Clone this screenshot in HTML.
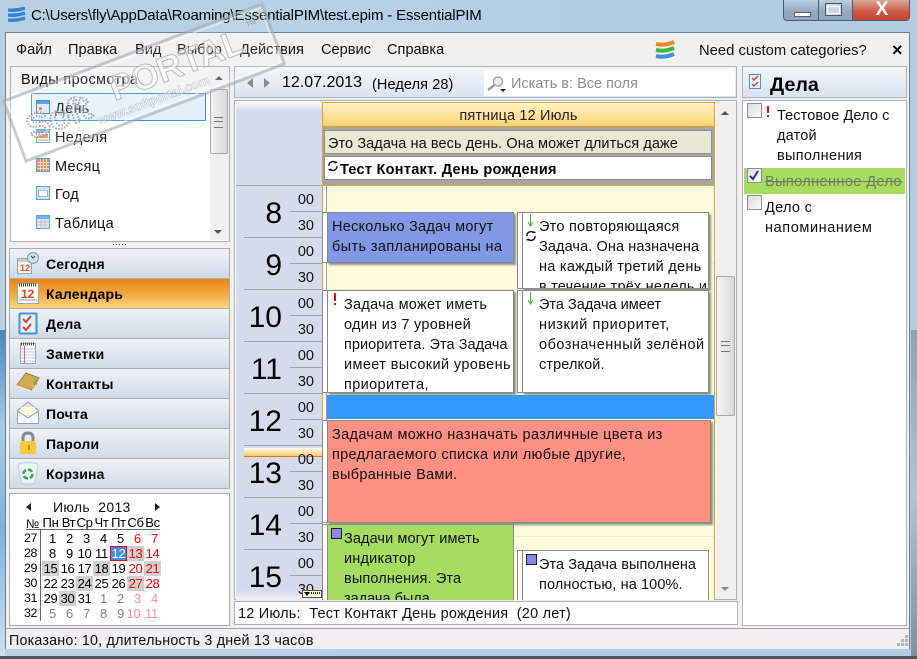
<!DOCTYPE html>
<html><head><meta charset="utf-8">
<style>
html,body{margin:0;padding:0}
body{width:917px;height:659px;overflow:hidden;position:relative;background:#b3cde3;font-family:"Liberation Sans","DejaVu Sans",sans-serif;color:#111;font-size:14px}
div,span,svg{position:absolute}
.t{white-space:nowrap;line-height:20px}
.n{left:10px;width:219px;height:29px;background:linear-gradient(#eef2f7,#cfdbe7);border-bottom:1px solid #a9adb1}
.nt{position:absolute;left:36px;top:5px;font-weight:bold;font-size:14px;letter-spacing:.2px;line-height:20px;white-space:nowrap;color:#000}
.v{left:55px;font-size:14.5px;letter-spacing:.3px;line-height:20px;white-space:nowrap}
.h{left:244px;width:78px;height:1px;background:#a0a4ab}
.m{left:290px;width:32px;height:1px;background:#a0a4ab}
.hh{width:40px;text-align:right;left:242px;font-size:30px;line-height:36px;color:#000}
.mm{left:288px;width:26px;text-align:right;font-size:14.5px;line-height:18px;color:#111}
.g{left:327px;width:387px;height:1px;background:#f0eccb}
.ev{box-sizing:border-box;border:1px solid #8a8a8a;box-shadow:2px 2px 2px #8e8e80;overflow:hidden}
.st{box-sizing:border-box;background:#fff;border:1px solid #8a8a8a;border-right:0;width:6px}
.c{width:17px;height:15px;line-height:15px;text-align:center;font-size:13px;letter-spacing:-.3px;color:#000}
.w{left:23px;width:14px;height:15px;line-height:15px;text-align:right;font-size:12.4px;letter-spacing:-.4px;color:#000;overflow:hidden}
.r{color:#f00}.o{color:#808080}.p{color:#ff8a99}.b{background:#d0d0d0}
.l{white-space:nowrap;font-size:14.5px;line-height:20px;color:#111}
.mn{top:40px;font-size:14.6px}
</style></head>
<body>
<!-- aero frame -->
<div style="left:0;top:0;width:917px;height:659px;background:linear-gradient(90deg,#b9d0e2 0,#b5d0e6 40%,#b0cbe2 100%)"></div>
<div style="left:0;top:330px;width:5px;height:329px;background:linear-gradient(#4a86bd,#a9cbe8 30%,#7fb0dc 60%,#cfe0ef)"></div>
<div style="left:911px;top:330px;width:6px;height:329px;background:linear-gradient(#8fa3b5,#b0c4d4 50%,#7f8f9c)"></div>
<div style="left:0;top:656px;width:917px;height:3px;background:#4e565e"></div>
<!-- title -->
<svg style="left:7px;top:7px" width="19" height="16" viewBox="0 0 19 16"><path d="M1 3Q9 4 18 1M1 8Q9 9 18 6M1 13Q9 14 18 11" stroke="#2f86d8" stroke-width="3.4" fill="none"/></svg>
<div class="t" style="left:31px;top:6px;font-size:15px;letter-spacing:-.17px;color:#000">C:\Users\fly\AppData\Roaming\EssentialPIM\test.epim - EssentialPIM</div>
<!-- window buttons -->
<div style="left:783px;top:0;width:127px;height:21px;box-sizing:border-box;border:1px solid #4f5b66;border-top:0;border-radius:0 0 4px 4px;background:linear-gradient(#b9cfe2,#93aabf 55%,#8ea5ba);overflow:hidden">
 <div style="left:34px;top:0;width:1px;height:21px;background:#4f5b66"></div>
 <div style="left:68px;top:0;width:58px;height:21px;border-left:1px solid #4f5b66;background:linear-gradient(#d9a89c,#cf5a45 55%,#c24030)"></div>
 <div style="left:10px;top:12px;width:15px;height:3px;background:#fff;border:1px solid #56616c"></div>
 <div style="left:41px;top:3px;width:15px;height:11px;border:1px solid #4c5762;background:#c9d9e6"><div style="left:1px;top:2px;width:11px;height:6px;border:1px solid #fff"></div></div>
 <div style="left:69px;top:-2px;width:58px;text-align:center;color:#fff;font:bold 19px/24px 'Liberation Sans',sans-serif">X</div>
</div>
<!-- client -->
<div style="left:5px;top:32px;width:905px;height:617px;box-sizing:border-box;border:1px solid #6f7f8e;background:#f0f0f0"></div>
<div class="t mn" style="left:16px">Файл</div>
<div class="t mn" style="left:68px">Правка</div>
<div class="t mn" style="left:135px">Вид</div>
<div class="t mn" style="left:177px">Выбор</div>
<div class="t mn" style="left:240px">Действия</div>
<div class="t mn" style="left:321px">Сервис</div>
<div class="t mn" style="left:387px">Справка</div>
<svg style="left:654px;top:40px" width="22" height="19" viewBox="0 0 22 19"><path d="M2 4Q11 6 20 2" stroke="#f08a1c" stroke-width="4" fill="none"/><path d="M2 10Q11 12 20 8" stroke="#3fb93f" stroke-width="4" fill="none"/><path d="M2 16Q11 18 20 14" stroke="#3a8fe0" stroke-width="4" fill="none"/></svg>
<div class="t" style="left:699px;top:41px;font-size:14.8px">Need custom categories?</div>
<div class="t" style="left:892px;top:40px;font-size:18px;font-weight:bold;color:#000">×</div>

<!-- views panel -->
<div style="left:10px;top:66px;width:220px;height:175px;background:#fff;box-sizing:border-box;border:1px solid #aeb2b6;border-bottom:0"></div>
<div style="left:11px;top:67px;width:199px;height:26px;background:#f3f3f3"></div>
<div class="t" style="left:21px;top:70px;font-size:14.5px;letter-spacing:.35px">Виды просмотра</div>
<div style="left:31px;top:93px;width:175px;height:28px;box-sizing:border-box;border:1px solid #3f8fe0;background:#e4effa"></div>
<div class="v" style="top:99px">День</div>
<div class="v" style="top:128px">Неделя</div>
<div class="v" style="top:157px">Месяц</div>
<div class="v" style="top:185px">Год</div>
<div class="v" style="top:214px">Таблица</div>
<svg style="left:36px;top:100px" width="14" height="14"><rect x=".5" y=".5" width="13" height="13" fill="#dde9f5" stroke="#2f82cf"/><rect x="1" y="1" width="12" height="3" fill="#3f93e0"/><rect x="3" y="7" width="3" height="3" fill="#e8734a"/></svg>
<svg style="left:36px;top:129px" width="14" height="14"><rect x=".5" y=".5" width="13" height="13" fill="#fff" stroke="#55a5ee"/><rect x="1" y="1" width="12" height="3" fill="#6fb5f0"/><rect x="2" y="5" width="10" height="4" fill="#f08a5d"/><rect x="2" y="10" width="10" height="2" fill="#f6c0a0"/></svg>
<svg style="left:36px;top:158px" width="14" height="14"><rect x=".5" y=".5" width="13" height="13" fill="#f08a5d" stroke="#55a5ee"/><path d="M4.5 1V13M7.5 1V13M10.500 1V13M1 4.5H13M1 7.5H13M1 10.500H13" stroke="#ffd8c0"/></svg>
<svg style="left:36px;top:186px" width="14" height="14"><rect x=".5" y=".5" width="13" height="13" fill="#cfe6fb" stroke="#55a5ee"/><rect x="2.5" y="4.5" width="9" height="6" fill="#fff" stroke="#5b7fb5" stroke-dasharray="1 1"/></svg>
<svg style="left:36px;top:215px" width="14" height="14"><rect x=".5" y=".5" width="13" height="13" fill="#e3e6ee" stroke="#55a5ee"/><rect x="1" y="1" width="12" height="3" fill="#6fb5f0"/><path d="M1 7H13M1 10H13M5 4V13M9 4V13" stroke="#c0c4d0"/></svg>
<!-- views scrollbar -->
<div style="left:210px;top:67px;width:19px;height:173px;background:#f0f0f0"></div>
<div style="left:210px;top:89px;width:18px;height:65px;box-sizing:border-box;border:1px solid #a8a8a8;border-radius:2px;background:linear-gradient(90deg,#f2f2f2,#d8d8d8)"></div>
<div style="left:214px;top:117px;width:9px;height:9px;border-top:1px solid #777;border-bottom:1px solid #777"><div style="left:0;top:3px;width:9px;height:1px;background:#777"></div></div>
<div style="left:215px;top:76px;width:0;height:0;border:4px solid transparent;border-bottom:4px solid #555;border-top:0"></div>
<div style="left:214px;top:230px;width:0;height:0;border:4px solid transparent;border-top:4px solid #555;border-bottom:0"></div>
<div style="left:10px;top:241px;width:220px;height:8px;background:#f0f0f0;border-top:1px solid #aeb2b6;box-sizing:border-box"></div>
<div style="left:113px;top:244px;width:14px;height:1px;background-image:linear-gradient(90deg,#333 1px,transparent 1px);background-size:3px 1px"></div>

<!-- nav -->
<div style="left:9px;top:248px;width:221px;height:241px;background:#a9adb1"></div>
<div class="n" style="top:249px"><div class="nt">Сегодня</div></div>
<div class="n" style="top:279px;background:linear-gradient(#e98510,#f2a83c 50%,#fbd57e)"><div class="nt">Календарь</div></div>
<div class="n" style="top:309px"><div class="nt">Дела</div></div>
<div class="n" style="top:339px"><div class="nt">Заметки</div></div>
<div class="n" style="top:369px"><div class="nt">Контакты</div></div>
<div class="n" style="top:399px"><div class="nt">Почта</div></div>
<div class="n" style="top:429px"><div class="nt">Пароли</div></div>
<div class="n" style="top:459px"><div class="nt">Корзина</div></div>
<!-- nav icons -->
<svg style="left:16px;top:251px" width="24" height="24"><rect x="1.5" y="7.5" width="14" height="15" fill="#f4f4f4" stroke="#9aa"/><rect x="2" y="8" width="13" height="3" fill="#c9ccd0"/><text x="4" y="20" font-size="9" font-weight="bold" fill="#e85a20" font-family="Liberation Sans">12</text><circle cx="17" cy="7" r="5.5" fill="#cfe0f0" stroke="#7f97ae"/><path d="M15 5L17 7L19 5" stroke="#445" fill="none"/></svg>
<svg style="left:16px;top:281px" width="24" height="24"><rect x="1.5" y="2.5" width="21" height="20" fill="#fbfbfb" stroke="#9aa"/><path d="M3 4H21" stroke="#444" stroke-width="3" stroke-dasharray="1 1"/><rect x="4" y="7" width="16" height="10" fill="#fff"/><text x="5" y="17" font-size="12" font-weight="bold" fill="#e8401c" font-family="Liberation Sans">12</text><path d="M3 19H21" stroke="#c5c9d5" stroke-width="2"/></svg>
<svg style="left:18px;top:311px" width="20" height="24"><rect x="1.5" y="2.5" width="17" height="20" rx="1" fill="#e8eef5" stroke="#3f93e0" stroke-width="2"/><path d="M5 8L8 11L13 5M5 16L8 19L13 13" stroke="#d8442a" stroke-width="2" fill="none"/></svg>
<svg style="left:20px;top:341px" width="17" height="24"><rect x=".5" y="2.5" width="15" height="20" fill="#fdfdff" stroke="#9aa6b8"/><path d="M1 3H15" stroke="#555" stroke-width="3" stroke-dasharray="1 1"/><path d="M1 8H15M1 11H15M1 14H15M1 17H15M1 20H15" stroke="#bcd0e8"/><path d="M4.5 5V22" stroke="#e06a50"/></svg>
<svg style="left:16px;top:372px" width="24" height="20"><path d="M1 13L10 1L23 6L15 18Z" fill="#d6a852" stroke="#a07a30"/><path d="M1 13L1 15L15 20L15 18Z" fill="#f2e6c8"/><path d="M19 8L22 9M18 11L21 12" stroke="#6cb33c" stroke-width="2"/><path d="M16 14L19 15" stroke="#e9c53a" stroke-width="2"/></svg>
<svg style="left:16px;top:401px" width="24" height="24"><path d="M1.5 9.5L12 1L22.5 9.5V22.5H1.5Z" fill="#dde6f0" stroke="#93a3b3"/><rect x="5" y="6" width="14" height="8" fill="#fffbd8"/><path d="M1.5 10L12 17L22.5 10V22.5H1.5Z" fill="#f4f7fb" stroke="#93a3b3"/></svg>
<svg style="left:19px;top:431px" width="18" height="24"><path d="M4 11V7Q4 2 9 2Q14 2 14 7V11" stroke="#8a8a8a" stroke-width="3" fill="none"/><rect x="1" y="10" width="16" height="13" rx="2" fill="#f6c93a"/><rect x="9" y="14" width="2" height="5" fill="#c89010"/></svg>
<svg style="left:17px;top:461px" width="22" height="24"><path d="M1 3Q11 0 21 3L18 22Q11 24 4 22Z" fill="#e8f3fa" stroke="#b5cfe0"/><circle cx="11" cy="13" r="4.5" fill="none" stroke="#3eaa3e" stroke-width="2.5" stroke-dasharray="5 2"/></svg>

<!-- mini cal -->
<div style="left:9px;top:493px;width:221px;height:133px;box-sizing:border-box;border:1px solid #a9adb1;background:#fff"></div>
<div style="left:26px;top:503px;width:0;height:0;border:4px solid transparent;border-right:5px solid #222;border-left:0"></div>
<div style="left:155px;top:503px;width:0;height:0;border:4px solid transparent;border-left:5px solid #222;border-right:0"></div>
<div class="t" style="left:53px;top:497px;font-size:14px;letter-spacing:.3px">Июль&nbsp; 2013</div>
<div class="t" style="left:26px;top:514px;font-size:12.5px;letter-spacing:-.3px">№</div>
<div class="t c" style="left:42px;top:515px">Пн</div><div class="t c" style="left:60px;top:515px">Вт</div><div class="t c" style="left:76px;top:515px">Ср</div><div class="t c" style="left:93px;top:515px">Чт</div><div class="t c" style="left:110px;top:515px">Пт</div><div class="t c" style="left:127px;top:515px">Сб</div><div class="t c" style="left:144px;top:515px">Вс</div>
<div style="left:26px;top:529px;width:134px;height:1px;background:#666"></div>
<div style="left:40px;top:530px;width:1px;height:91px;background:#666"></div>
<div class="w" style="top:531px">27</div><div class="w" style="top:546px">28</div><div class="w" style="top:561px">29</div><div class="w" style="top:576px">30</div><div class="w" style="top:591px">31</div><div class="w" style="top:606px">32</div>

<div class="c" style="left:44px;top:531px">1</div><div class="c" style="left:61px;top:531px">2</div><div class="c" style="left:78px;top:531px">3</div><div class="c" style="left:95px;top:531px">4</div><div class="c" style="left:112px;top:531px">5</div><div class="c r" style="left:129px;top:531px">6</div><div class="c r" style="left:146px;top:531px">7</div>

<div class="c" style="left:44px;top:546px">8</div><div class="c" style="left:61px;top:546px">9</div><div class="c" style="left:76px;top:546px">10</div><div class="c" style="left:93px;top:546px">11</div>
<div class="c" style="left:110px;top:546px;background:#3d8fe8;color:#fff;box-sizing:border-box;border:1px solid #f00;line-height:13px">12</div>
<div class="c r b" style="left:127px;top:546px">13</div><div class="c r" style="left:144px;top:546px">14</div>

<div class="c b" style="left:42px;top:561px">15</div><div class="c" style="left:59px;top:561px">16</div><div class="c" style="left:76px;top:561px">17</div><div class="c b" style="left:93px;top:561px">18</div><div class="c" style="left:110px;top:561px">19</div><div class="c r" style="left:127px;top:561px">20</div><div class="c r b" style="left:144px;top:561px">21</div>

<div class="c" style="left:42px;top:576px">22</div><div class="c" style="left:59px;top:576px">23</div><div class="c b" style="left:76px;top:576px">24</div><div class="c" style="left:93px;top:576px">25</div><div class="c" style="left:110px;top:576px">26</div><div class="c r b" style="left:127px;top:576px">27</div><div class="c r" style="left:144px;top:576px">28</div>

<div class="c" style="left:42px;top:591px">29</div><div class="c b" style="left:59px;top:591px">30</div><div class="c" style="left:76px;top:591px">31</div><div class="c o" style="left:95px;top:591px">1</div><div class="c o" style="left:112px;top:591px">2</div><div class="c p" style="left:129px;top:591px">3</div><div class="c p" style="left:146px;top:591px">4</div>

<div class="c o" style="left:44px;top:606px">5</div><div class="c o" style="left:61px;top:606px">6</div><div class="c o" style="left:78px;top:606px">7</div><div class="c o" style="left:95px;top:606px">8</div><div class="c o" style="left:112px;top:606px">9</div><div class="c p" style="left:125px;top:606px">10</div><div class="c p" style="left:143px;top:606px">11</div>

<!-- center header -->
<div style="left:234px;top:66px;width:503px;height:32px;box-sizing:border-box;border:1px solid #aeb2b6;background:linear-gradient(#f3f6fa,#d9e4ef)"></div>
<div style="left:247px;top:78px;width:0;height:0;border:5px solid transparent;border-right:6px solid #8d8d8d;border-left:0"></div>
<div style="left:264px;top:78px;width:0;height:0;border:5px solid transparent;border-left:6px solid #8d8d8d;border-right:0"></div>
<div class="t" style="left:282px;top:73px;font-size:16px;color:#000">12.07.2013</div>
<div class="t" style="left:372px;top:75px;font-size:14.5px;letter-spacing:.1px;color:#000">(Неделя 28)</div>
<div style="left:484px;top:70px;width:251px;height:26px;background:#fff"></div>
<svg style="left:486px;top:75px" width="24" height="18"><circle cx="12" cy="6.5" r="4.5" fill="#eee" stroke="#a8a8a8" stroke-width="1.5"/><path d="M8.5 10L2 15" stroke="#9a9a9a" stroke-width="2.5"/><path d="M14 14H20L17 17Z" fill="#222"/></svg>
<div class="t" style="left:511px;top:74px;font-size:14.5px;color:#8e8e8e">Искать в: Все поля</div>

<!-- day view -->
<div style="left:234px;top:100px;width:503px;height:500px;box-sizing:border-box;border:1px solid #aeb2b6;background:#fff"></div>
<div style="left:236px;top:111px;width:86px;height:489px;background:#d3dbed"></div>
<div style="left:236px;top:101px;width:86px;height:10px;background:linear-gradient(#fff,#d3dbed)"></div>
<div style="left:236px;top:590px;width:86px;height:10px;background:linear-gradient(#d3dbed,#eef1f7)"></div>
<div style="left:322px;top:186px;width:393px;height:414px;background:#fefcdc"></div>
<div style="left:322px;top:102px;width:393px;height:25px;box-sizing:border-box;border:1px solid #f0a020;background:linear-gradient(#fff4c8,#fcd272);text-align:center;font-size:14.5px;letter-spacing:.15px;line-height:26px;color:#222">пятница 12 Июль</div>
<div style="left:322px;top:127px;width:393px;height:59px;background:#a5a5a5;border-left:1px solid #f0a020;border-right:1px solid #f0a020;box-sizing:border-box"></div>
<div style="left:324px;top:130px;width:388px;height:24px;box-sizing:border-box;border:1px solid #8c8c8c;background:#e8e8d4"><div class="t" style="left:3px;top:3px;font-size:14.5px;letter-spacing:.08px">Это Задача на весь день. Она может длиться даже</div></div>
<div style="left:324px;top:156px;width:388px;height:24px;box-sizing:border-box;border:1px solid #8c8c8c;background:#fff"><div class="t" style="left:15px;top:3px;font-size:14.5px;letter-spacing:.27px;font-weight:bold;color:#000">Тест Контакт. День рождения</div></div>
<svg style="left:327px;top:160px" width="12" height="12" viewBox="0 0 12 12"><path d="M2 6A4 4 0 0 1 9 3M10 6A4 4 0 0 1 3 9" fill="none" stroke="#111" stroke-width="1.4"/><path d="M7 3H11L9 1ZM5 9H1L3 11Z" fill="#111"/></svg>
<div style="left:322px;top:186px;width:1px;height:414px;background:#f0a020"></div>
<div style="left:714px;top:127px;width:1px;height:473px;background:#f0a020"></div>
<div style="left:322px;top:185px;width:393px;height:1px;background:#f0a020"></div>
<div style="left:323px;top:186px;width:4px;height:414px;background:#fff;border-right:1px solid #9b9b9b;box-sizing:border-box"></div>

<!-- grid lines -->
<div class="g" style="top:237px"></div><div class="g" style="top:263px"></div><div class="g" style="top:289px"></div><div class="g" style="top:536px"></div><div class="g" style="top:445px"></div><div class="g" style="top:471px"></div><div class="g" style="top:497px"></div>

<!-- time col -->
<div style="left:236px;top:185px;width:86px;height:1px;background:#a0a4ab"></div>
<div class="h" style="top:237px"></div><div class="h" style="top:289px"></div><div class="h" style="top:341px"></div><div class="h" style="top:393px"></div><div class="h" style="top:445px"></div><div class="h" style="top:497px"></div><div class="h" style="top:549px"></div>
<div class="m" style="top:211px"></div><div class="m" style="top:263px"></div><div class="m" style="top:315px"></div><div class="m" style="top:367px"></div><div class="m" style="top:419px"></div><div class="m" style="top:471px"></div><div class="m" style="top:523px"></div><div class="m" style="top:575px"></div>
<div class="hh" style="top:196px">8</div><div class="hh" style="top:248px">9</div><div class="hh" style="top:300px">10</div><div class="hh" style="top:352px">11</div><div class="hh" style="top:404px">12</div><div class="hh" style="top:456px">13</div><div class="hh" style="top:508px">14</div><div class="hh" style="top:560px">15</div>
<div style="left:244px;top:448px;width:78px;height:8px;background:linear-gradient(#fbfbf0,#f8c870)"></div>
<div style="left:244px;top:456px;width:78px;height:1px;background:#e07a10"></div>
<div class="mm" style="top:191px">00</div><div class="mm" style="top:217px">30</div><div class="mm" style="top:243px">00</div><div class="mm" style="top:269px">30</div><div class="mm" style="top:295px">00</div><div class="mm" style="top:321px">30</div><div class="mm" style="top:347px">00</div><div class="mm" style="top:373px">30</div><div class="mm" style="top:399px">00</div><div class="mm" style="top:425px">30</div><div class="mm" style="top:451px">00</div><div class="mm" style="top:477px">30</div><div class="mm" style="top:503px">00</div><div class="mm" style="top:529px">30</div><div class="mm" style="top:555px">00</div><div class="mm" style="top:581px">30</div>
<div style="left:302px;top:590px;width:20px;height:8px;box-sizing:border-box;border:1px solid #555;background:#fffbd0"></div>
<div style="left:304px;top:592px;width:0;height:0;border:3px solid transparent;border-top:4px solid #000;border-bottom:0"></div>
<div style="left:311px;top:592px;width:10px;height:2px;background-image:linear-gradient(90deg,#333 1px,transparent 1px);background-size:2px 2px"></div>

<!-- events -->
<div class="st" style="left:322px;top:212px;height:51px"></div>
<div class="ev" style="left:327px;top:212px;width:187px;height:51px;background:#8298e4;border-color:#7d8a9c"><div class="l" style="left:4px;top:4px;letter-spacing:.24px">Несколько Задач могут</div><div class="l" style="left:4px;top:24px;letter-spacing:.38px">быть запланированы на</div></div>
<div class="st" style="left:517px;top:212px;height:77px"></div>
<div class="ev" style="left:522px;top:212px;width:187px;height:77px;background:#fff"><div class="l" style="left:16px;top:4px;letter-spacing:.24px">Это повторяющаяся</div><div class="l" style="left:16px;top:24px;letter-spacing:.1px">Задача. Она назначена</div><div class="l" style="left:16px;top:44px;letter-spacing:.27px">на каждый третий день</div><div class="l" style="left:16px;top:64px;letter-spacing:.2px">в течение трёх недель и</div></div>
<svg style="left:527px;top:214px" width="8" height="13"><path d="M3.5 0V11M1 8L3.5 12L6 8" stroke="#2ec22e" fill="none"/></svg>
<svg style="left:525px;top:230px" width="12" height="12" viewBox="0 0 12 12"><path d="M2 6A4 4 0 0 1 9 3M10 6A4 4 0 0 1 3 9" fill="none" stroke="#111" stroke-width="1.4"/><path d="M7 3H11L9 1ZM5 9H1L3 11Z" fill="#111"/></svg>
<div class="st" style="left:322px;top:290px;height:103px"></div>
<div class="ev" style="left:327px;top:290px;width:187px;height:103px;background:#fff"><div class="l" style="left:16px;top:4px;letter-spacing:.27px">Задача может иметь</div><div class="l" style="left:16px;top:24px;letter-spacing:.28px">один из 7 уровней</div><div class="l" style="left:16px;top:44px;letter-spacing:.05px">приоритета. Эта Задача</div><div class="l" style="left:16px;top:64px;letter-spacing:.38px">имеет высокий уровень</div><div class="l" style="left:16px;top:84px;letter-spacing:.36px">приоритета,</div></div>
<svg style="left:333px;top:293px" width="4" height="13"><rect x="1" y="0" width="2" height="8" fill="#f00"/><rect x="1" y="10" width="2" height="2" fill="#f00"/></svg>
<div class="st" style="left:517px;top:290px;height:103px"></div>
<div class="ev" style="left:522px;top:290px;width:187px;height:103px;background:#fff"><div class="l" style="left:16px;top:4px">Эта Задача имеет</div><div class="l" style="left:16px;top:24px;letter-spacing:.6px">низкий приоритет,</div><div class="l" style="left:16px;top:44px;letter-spacing:.5px">обозначенный зелёной</div><div class="l" style="left:16px;top:64px;letter-spacing:.1px">стрелкой.</div></div>
<svg style="left:527px;top:292px" width="8" height="13"><path d="M3.5 0V11M1 8L3.5 12L6 8" stroke="#2ec22e" fill="none"/></svg>
<div style="left:327px;top:395px;width:387px;height:24px;background:#3399ff"></div>
<div class="st" style="left:322px;top:420px;height:103px"></div>
<div class="ev" style="left:327px;top:420px;width:384px;height:103px;background:#ff9082"><div class="l" style="left:4px;top:4px;letter-spacing:.35px">Задачам можно назначать различные цвета из</div><div class="l" style="left:4px;top:24px;letter-spacing:.32px">предлагаемого списка или любые другие,</div><div class="l" style="left:4px;top:44px;letter-spacing:.3px">выбранные Вами.</div></div>
<div class="st" style="left:322px;top:524px;height:76px;border-bottom:0"></div>
<div style="left:327px;top:524px;width:187px;height:76px;box-sizing:border-box;border:1px solid #8a8a8a;border-bottom:0;background:#a6dc60;overflow:hidden"><div class="l" style="left:16px;top:4px;letter-spacing:.1px">Задачи могут иметь</div><div class="l" style="left:16px;top:24px;letter-spacing:.2px">индикатор</div><div class="l" style="left:16px;top:44px;letter-spacing:.13px">выполнения. Эта</div><div class="l" style="left:16px;top:64px">задача была</div></div>
<div style="left:331px;top:528px;width:9px;height:9px;border:1px solid #222;background:#8888ee"></div>
<div style="left:517px;top:550px;width:5px;height:50px;box-sizing:border-box;background:#fff;border:1px solid #8a8a8a;border-right:0;border-bottom:0"></div>
<div style="left:522px;top:550px;width:187px;height:50px;box-sizing:border-box;border:1px solid #8a8a8a;border-bottom:0;background:#fff;overflow:hidden"><div class="l" style="left:16px;top:4px;letter-spacing:.05px">Эта Задача выполнена</div><div class="l" style="left:16px;top:24px;letter-spacing:.1px">полностью, на 100%.</div></div>
<div style="left:526px;top:554px;width:9px;height:9px;border:1px solid #222;background:#8888ee"></div>

<!-- day scrollbar -->
<div style="left:716px;top:101px;width:20px;height:498px;background:#f0f0f0"></div>
<div style="left:716px;top:276px;width:19px;height:140px;box-sizing:border-box;border:1px solid #a8a8a8;border-radius:2px;background:linear-gradient(90deg,#f5f5f5,#d8d8d8)"></div>
<div style="left:721px;top:341px;width:9px;height:9px;border-top:1px solid #777;border-bottom:1px solid #777"><div style="left:0;top:3px;width:9px;height:1px;background:#777"></div></div>
<div style="left:721px;top:111px;width:0;height:0;border:4.5px solid transparent;border-bottom:4px solid #555;border-top:0"></div>
<div style="left:721px;top:587px;width:0;height:0;border:4.5px solid transparent;border-top:4px solid #888;border-bottom:0"></div>

<!-- info line -->
<div style="left:234px;top:601px;width:504px;height:24px;box-sizing:border-box;border:1px solid #aeb2b6;background:#fff"></div>
<div class="l" style="left:238px;top:604px;white-space:pre;letter-spacing:.2px">12 Июль:  Тест Контакт День рождения  (20 лет)</div>

<!-- right panel -->
<div style="left:742px;top:66px;width:165px;height:32px;box-sizing:border-box;border:1px solid #aeb2b6;background:linear-gradient(#f3f6fa,#d9e4ef)"></div>
<svg style="left:749px;top:74px" width="13" height="16"><rect x=".5" y=".5" width="11" height="14" fill="#eef3f8" stroke="#3f93e0"/><path d="M3 4L5 6L9 2M3 10L5 12L9 8" stroke="#d8442a" stroke-width="1.5" fill="none"/></svg>
<div class="t" style="left:770px;top:75px;font-size:19.8px;font-weight:bold;color:#000">Дела</div>
<div style="left:742px;top:100px;width:165px;height:526px;box-sizing:border-box;border:1px solid #aeb2b6;background:#fff"></div>
<div style="left:747px;top:103px;width:13px;height:13px;border:1px solid #8e8f8f;background:linear-gradient(135deg,#dcdcdc,#fafafa)"></div>
<svg style="left:766px;top:106px" width="4" height="12"><rect x="1" y="0" width="2" height="7" fill="#f00"/><rect x="1" y="9" width="2" height="2" fill="#f00"/></svg>
<div class="l" style="left:777px;top:106px;letter-spacing:.1px">Тестовое Дело с</div>
<div class="l" style="left:777px;top:126px;letter-spacing:.2px">датой</div>
<div class="l" style="left:777px;top:146px;letter-spacing:.3px">выполнения</div>
<div style="left:744px;top:168px;width:161px;height:26px;background:#a6dc60"></div>
<div style="left:747px;top:168px;width:13px;height:13px;border:1px solid #8e8f8f;background:linear-gradient(135deg,#dcdcdc,#fafafa)"></div>
<svg style="left:749px;top:170px" width="11" height="11"><path d="M1 6L4 9L9 1" stroke="#2c2f8e" stroke-width="2" fill="none"/></svg>
<div class="l" style="left:765px;top:172px;letter-spacing:.4px;color:#707a66;text-decoration:line-through">Выполненное Дело</div>
<div style="left:747px;top:195px;width:13px;height:13px;border:1px solid #8e8f8f;background:linear-gradient(135deg,#dcdcdc,#fafafa)"></div>
<div class="l" style="left:765px;top:198px;letter-spacing:.3px">Дело с</div>
<div class="l" style="left:765px;top:218px;letter-spacing:.6px">напоминанием</div>

<!-- status -->
<div style="left:6px;top:628px;width:903px;height:21px;box-sizing:border-box;border-top:1px solid #9aa0a6;background:#f0eeee"></div>
<div class="t" style="left:9px;top:631px;font-size:14.3px;letter-spacing:.2px">Показано: 10, длительность 3 дней 13 часов</div>
<svg style="left:896px;top:634px" width="12" height="13" fill="#b5b5b5"><rect x="9" y="1" width="3" height="3"/><rect x="5" y="5" width="3" height="3"/><rect x="9" y="5" width="3" height="3"/><rect x="1" y="9" width="3" height="3"/><rect x="5" y="9" width="3" height="3"/><rect x="9" y="9" width="3" height="3"/></svg>

<!-- watermark -->
<svg style="left:0;top:0" width="320" height="200" font-family="Liberation Sans" font-weight="bold">
 <g transform="translate(144,82.5) rotate(-20.6)">
  <rect x="-138" y="-32" width="276" height="64" fill="rgba(255,255,255,.12)" stroke="rgba(165,170,176,.6)" stroke-width="3"/>
  <rect x="-135" y="-29" width="270" height="58" fill="none" stroke="rgba(255,255,255,.5)" stroke-width="1.5"/>
  <text x="-125" y="14" font-size="34" fill="rgba(255,255,255,.35)" stroke="rgba(130,135,142,.7)" stroke-width="2" stroke-dasharray="1.5 1.5">Soft</text>
  <text x="-34" y="7" font-size="35" fill="rgba(255,255,255,.55)" stroke="rgba(150,155,160,.65)" stroke-width="1">PORTAL</text>
  <text x="-57" y="24" font-size="12.5" fill="rgba(255,255,255,.5)" stroke="rgba(150,155,160,.6)" stroke-width=".5">www.softportal.com</text>
  <text x="116" y="-16" font-size="7" fill="rgba(150,155,160,.7)">TM</text>
 </g>
</svg>
</body></html>
